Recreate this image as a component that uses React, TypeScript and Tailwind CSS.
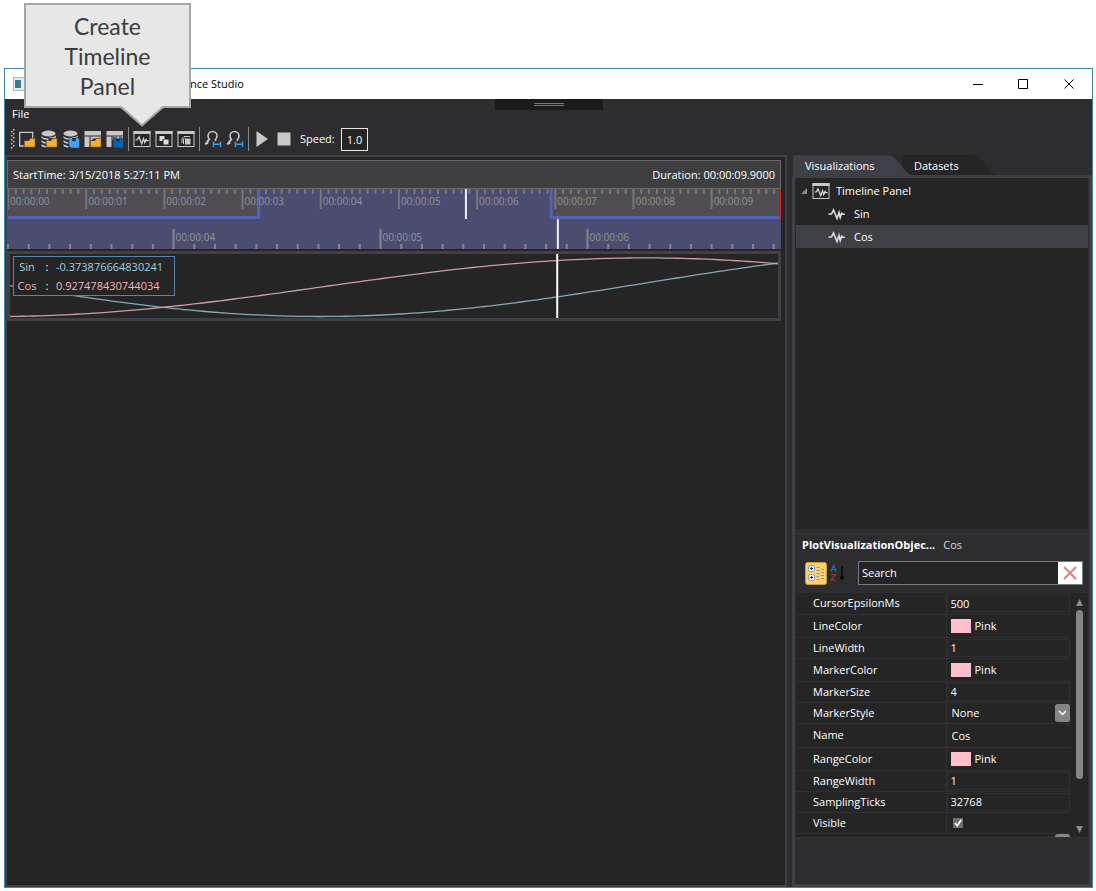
import React from 'react';

const VIEW_START = 3.2;
const VIEW_SPAN = 3.74;
const DURATION = 9.9;
const CURSOR = 5.857;

const navPct = (t: number) => `${(t / DURATION) * 100}%`;
const viewPct = (t: number) => `${((t - VIEW_START) / VIEW_SPAN) * 100}%`;

const plotW = 767;
const curve = (fn: (t: number) => number) => {
  const pts: string[] = [];
  for (let x = 0; x <= plotW; x += 6) {
    const t = VIEW_START + 0.015 + (x / plotW) * (VIEW_SPAN - 0.03);
    pts.push(`${x},${fn(t).toFixed(2)}`);
  }
  pts.push(`${plotW},${fn(VIEW_START + VIEW_SPAN - 0.015).toFixed(2)}`);
  return pts.join(' ');
};
const sinPoints = curve((t) => 62.5 - (Math.sin(t) + 1) * 33.4);
const cosPoints = curve((t) => 62.5 - (Math.cos(t) + 1) * 29.3);

function Ico({ children }: { children: React.ReactNode }) {
  return (
    <svg width="18" height="18" viewBox="0 0 18 18" fill="none" aria-hidden="true">
      {children}
    </svg>
  );
}

const Folder = () => <path d="M6.200 10.500H11l1.500-2.200H17.200V17.200H6.200z" fill="#f5ae33" stroke="#2d2d30" strokeWidth=".6" />;
const Disk = ({ c }: { c: string }) => (
  <path d="M7 7.500h3.500v3.500h3V7.500h2l2 2V18H9l-2-2z" fill={c} stroke="#2d2d30" strokeWidth=".5" />
);
const Stack = () => (
  <g fill="#c8c8c8">
    <ellipse cx="8.500" cy="3.500" rx="7" ry="3" />
    <path d="M1.500 6c1.500 2.200 5 2.400 7 2.400V10C5 10 2 9 1.500 7.800zM1.500 10c1 1.400 3 2 5 2.200v1.600c-3-.2-4.600-1-5-2zM1.500 14c1 1.200 3 1.800 5 2v1.500c-3-.2-4.600-.9-5-1.800z" />
    <path d="M9 7.500c3 0 6-.7 6.800-2V8H9z" />
  </g>
);
const Layout = () => (
  <g fill="#c8c8c8">
    <path d="M0.500 1h16.500v4.500H.5zM.5 6.500h5V17h-5z" />
    <path d="M6.500 6.500H17v2H8.500V10h-2z" />
  </g>
);
const Frame = () => (
  <>
    <rect x="1" y="1.500" width="16" height="15" fill="#252526" stroke="#c8c8c8" />
    <path d="M.5 1h17v3H.5z" fill="#c8c8c8" />
  </>
);
const Wave = () => (
  <path d="M2.500 10h1.800l1.700-3.300 2.700 7 1.800-5 1.200 4 1.500-4v2h2.300" stroke="#dcdcdc" strokeWidth="1.200" />
);
const BigWave = () => (
  <path d="M.5 9h3l2-4L9 13.500l2-6 1.200 5 1.600-5v1.700h3" stroke="#dcdcdc" strokeWidth="1.600" />
);
const Omega = () => (
  <>
    <path d="M1 13.500h2.500V11l2-1.500C4.500 8.500 4 7.500 4 6a4.500 4.500 0 1 1 9 0c0 1.500-.5 2.600-1.500 3.500V11" stroke="#c8c8c8" strokeWidth="1.600" />
    <path d="M1 14.500l3.500-3.500" stroke="#c8c8c8" strokeWidth="1.600" />
    <path d="M9.500 11.500V17M16.500 11.500V17M10 14.300h6" stroke="#3a9de8" strokeWidth="1.500" />
  </>
);

function Tool({ label, children }: { label: string; children: React.ReactNode }) {
  return (
    <button aria-label={label} className="flex h-6 w-[22px] items-center justify-center">
      {children}
    </button>
  );
}
const Sep = () => (
  <div className="flex w-[5px] justify-center">
    <div className="h-6 w-px bg-[#8a8a8e]" />
  </div>
);

function Toolbar() {
  return (
    <div className="flex h-6 items-center pl-1.5">
      <svg width="5" height="20" viewBox="0 0 5 20" aria-hidden="true">
        {[0, 4, 8, 12, 16].map((y) => (
          <g key={y} fill="#d0d0d0">
            <rect x="2" y={y} width="1.500" height="1.500" />
            <rect x="0" y={y + 2} width="1.500" height="1.500" />
          </g>
        ))}
      </svg>
      <Tool label="Open store">
        <Ico>
          <path d="M6 16H1.700V2.300h13V9" stroke="#c8c8c8" strokeWidth="1.300" />
          <Folder />
        </Ico>
      </Tool>
      <Tool label="Open dataset"><Ico><Stack /><Folder /></Ico></Tool>
      <Tool label="Save dataset"><Ico><Stack /><Disk c="#3ea2f5" /></Ico></Tool>
      <Tool label="Open layout"><Ico><Layout /><Folder /></Ico></Tool>
      <Tool label="Save layout"><Ico><Layout /><Disk c="#0065b3" /></Ico></Tool>
      <Sep />
      <Tool label="Create timeline panel"><Ico><Frame /><Wave /></Ico></Tool>
      <Tool label="Create 2D panel">
        <Ico><Frame /><path d="M4.500 6h5v3h-2v2h-3zM8.500 9.500h5v5h-5z" fill="#dcdcdc" /></Ico>
      </Tool>
      <Tool label="Create 3D panel">
        <Ico>
          <Frame />
          <path d="M8 8.500h5.500v6H8z" fill="#c8c8c8" />
          <path d="M5 13V8.500L7 6.500h6M6.500 14V9L8 7.500" stroke="#c8c8c8" />
        </Ico>
      </Tool>
      <Sep />
      <Tool label="Zoom to session"><Ico><Omega /></Ico></Tool>
      <Tool label="Zoom to selection"><Ico><Omega /></Ico></Tool>
      <Sep />
      <Tool label="Play"><Ico><path d="M3.500 1l11.500 8-11.500 8z" fill="#c8c8c8" /></Ico></Tool>
      <Tool label="Stop"><Ico><path d="M2.500 2.500h13v13h-13z" fill="#c8c8c8" /></Ico></Tool>
      <label htmlFor="speed" className="ml-[5px] w-[41px]">Speed:</label>
      <input id="speed" defaultValue="1.0" className="h-[23px] w-[27px] border border-[#e8e8e8] bg-[#252526] text-center text-white" />
    </div>
  );
}

function Navigator() {
  return (
    <svg className="block h-[30px] w-full" role="img" aria-label="Session navigator">
      <rect width="100%" height="30" fill="#504e53" />
      <rect x={navPct(VIEW_START)} width={navPct(VIEW_SPAN)} height="30" fill="#4a4d70" />
      {Array.from({ length: 99 }, (_, i) => (
        <rect key={i} x={navPct(i / 10)} y="0" width="2" height={i % 10 ? 5 : 20} fill="#76767c" />
      ))}
      <rect y="27" width={navPct(VIEW_START)} height="3" fill="#5461b5" />
      <rect x={navPct(VIEW_START)} width="3" height="30" fill="#5461b5" />
      <rect x={navPct(VIEW_START + VIEW_SPAN)} width="3" height="30" fill="#5461b5" />
      <rect x={navPct(VIEW_START + VIEW_SPAN)} y="27" width="31%" height="3" fill="#5461b5" />
      {Array.from({ length: 10 }, (_, i) => (
        <text key={i} x={navPct(i)} dx="3" y="16" fontSize="10" fill="#949498">{`00:00:0${i}`}</text>
      ))}
      <rect x="0" width="1" height="30" fill="#128a12" />
      <rect x={navPct(CURSOR)} width="2" height="30" fill="#f0f0f0" />
      <rect x="100%" width="2" height="30" fill="#d81e1e" transform="translate(-1 0)" />
    </svg>
  );
}

function ViewRuler() {
  return (
    <svg className="block h-[30px] w-full" role="img" aria-label="View ruler">
      <rect width="100%" height="30" fill="#4a4d70" />
      {Array.from({ length: 38 }, (_, i) => {
        const n = 32 + i;
        const major = n % 10 === 0;
        return <rect key={n} x={viewPct(n / 10)} y={major ? 10 : 25} width="2" height={major ? 20 : 5} fill="#85868f" />;
      })}
      {[4, 5, 6].map((n) => (
        <text key={n} x={viewPct(n)} dx="3" y="22" fontSize="10" fill="#949498">{`00:00:0${n}`}</text>
      ))}
      <rect x={viewPct(CURSOR)} width="2" height="30" fill="#f0f0f0" />
    </svg>
  );
}

function Plot() {
  return (
    <div className="relative mt-0.5 border-[3px] border-[#3f3f46] bg-[#252526]">
      <svg className="block h-16 w-full" viewBox="0 0 767 64" preserveAspectRatio="none" fill="none" role="img" aria-label="Sin and Cos plot">
        <polyline points={sinPoints} stroke="#84aab5" strokeWidth="1.300" />
        <polyline points={cosPoints} stroke="#cf9ba5" strokeWidth="1.300" />
        <rect x="545.500" width="2" height="64" fill="#fff" />
      </svg>
      <dl className="absolute left-[3px] top-0.5 grid h-10 w-[162px] grid-cols-[22px_18px_1fr] content-start border border-[#5b86a8] bg-[#252526] pl-0.5 leading-[19px]">
        <dt className="text-center text-[#9fd3e0]">Sin</dt>
        <dd className="text-center">:</dd>
        <dd className="text-[#9fd3e0]">-0.373876664830241</dd>
        <dt className="text-center text-[#f5b3bf]">Cos</dt>
        <dd className="text-center">:</dd>
        <dd className="text-[#f5b3bf]">0.927478430744034</dd>
      </dl>
    </div>
  );
}

function Tree() {
  return (
    <ul className="flex-1 bg-[#252526] pt-px leading-[23px]">
      <li className="flex h-[23px] items-center pl-1">
        <svg width="8" height="8" viewBox="0 0 8 8" aria-hidden="true"><path d="M7 1v6H1z" fill="#8c8c8c" /></svg>
        <span className="ml-1"><Ico><Frame /><Wave /></Ico></span>
        <span className="ml-1.5">Timeline Panel</span>
      </li>
      <li className="flex h-[23px] items-center pl-8"><Ico><BigWave /></Ico><span className="ml-2">Sin</span></li>
      <li className="flex h-[23px] items-center bg-[#3f3f46] pl-8"><Ico><BigWave /></Ico><span className="ml-2">Cos</span></li>
    </ul>
  );
}

type Row = { name: string; value: string; kind: 'text' | 'color' | 'select' | 'plain' | 'check' };
const rows: Row[] = [
  { name: 'CursorEpsilonMs', value: '500', kind: 'text' },
  { name: 'LineColor', value: 'Pink', kind: 'color' },
  { name: 'LineWidth', value: '1', kind: 'text' },
  { name: 'MarkerColor', value: 'Pink', kind: 'color' },
  { name: 'MarkerSize', value: '4', kind: 'text' },
  { name: 'MarkerStyle', value: 'None', kind: 'select' },
  { name: 'Name', value: 'Cos', kind: 'plain' },
  { name: 'RangeColor', value: 'Pink', kind: 'color' },
  { name: 'RangeWidth', value: '1', kind: 'text' },
  { name: 'SamplingTicks', value: '32768', kind: 'text' },
  { name: 'Visible', value: '', kind: 'check' },
];
const rowHeight = { text: 'h-[21px]', select: 'h-[21px]', check: 'h-[21px]', color: 'h-[23px]', plain: 'h-6' };

function Value({ row }: { row: Row }) {
  if (row.kind === 'color')
    return (
      <div className="flex items-center pl-1">
        <span className="h-3.5 w-5 bg-[#ffc0cb]" />
        <span className="ml-1">{row.value}</span>
      </div>
    );
  if (row.kind === 'select')
    return (
      <div className="flex items-center">
        <select id={row.name} className="-mr-[15px] h-[18px] flex-1 appearance-none bg-transparent pl-[5px] text-white">
          <option>{row.value}</option>
        </select>
        <svg width="15" height="18" viewBox="0 0 15 18" className="pointer-events-none" aria-hidden="true">
          <rect width="15" height="18" rx="2.500" fill="#858585" />
          <path d="M4 7l3.500 3.500L11 7" fill="none" stroke="#fff" strokeWidth="1.500" />
        </svg>
      </div>
    );
  if (row.kind === 'check')
    return (
      <div className="relative ml-1.5 h-2.5 w-2.5">
        <input id={row.name} type="checkbox" defaultChecked className="block h-2.5 w-2.5 appearance-none bg-[#6e6e6e]" />
        <svg className="pointer-events-none absolute inset-0" width="10" height="10" viewBox="0 0 10 10" aria-hidden="true">
          <path d="M2 5l2.200 2.700L8.300 1.800" fill="none" stroke="#fff" strokeWidth="1.800" />
        </svg>
      </div>
    );
  return (
    <input
      id={row.name}
      defaultValue={row.value}
      className={row.kind === 'text' ? 'block h-[18px] w-full border border-[#2f2f32] bg-transparent pl-[3px]' : 'block h-[18px] w-full bg-transparent pl-[5px]'}
    />
  );
}

function Properties() {
  return (
    <section className="flex h-[351px] flex-col border-t border-[#333338] bg-[#2d2d30]">
      <div className="flex h-[22px] items-center gap-2 pl-1.5">
        <b className="font-bold">PlotVisualizationObjec...</b>
        <span className="text-[#dcdcdc]">Cos</span>
      </div>
      <div className="mb-[3px] flex h-[34px] items-center pl-[9px] pr-[5px]">
        <button aria-label="Categorized">
          <svg width="22" height="23" viewBox="0 0 22 23" className="block">
            <rect x=".5" y=".5" width="21" height="22" rx="2" fill="#fbd075" stroke="#c99b3c" />
            <g fill="#fff" stroke="#7d93b8"><rect x="3.500" y="3.500" width="6" height="6" rx="2" /><rect x="3.500" y="12.500" width="6" height="6" rx="2" /></g>
            <path d="M5 6.500h3M6.500 5v3M5 15.500h3M6.500 14v3" stroke="#1a2f55" />
            <path d="M11.500 5.500h3M11.500 8.500h3M11.500 11.500h3M11.500 14.500h3M11.500 17.500h3M16 7.500h3M16 10.500h3M16 13.500h3M16 16.500h3" stroke="#a09a80" />
          </svg>
        </button>
        <button aria-label="Sort alphabetically" className="ml-[3px]">
          <svg width="16" height="18" viewBox="0 0 16 18" className="block" fill="none">
            <path d="M1 7.500L3.500 1.500 6 7.500M2 5.500h3" stroke="#3565b8" strokeWidth="1.200" />
            <path d="M1 10.500h4.500L1 16h5" stroke="#a83236" strokeWidth="1.200" />
            <path d="M12 2v13M10 12.500l2 3 2-3" stroke="#050505" strokeWidth="1.300" />
          </svg>
        </button>
        <div className="ml-3 flex h-6 flex-1 border border-[#7a7a7a] bg-[#252526]">
          <input aria-label="Search" defaultValue="Search" className="min-w-0 flex-1 bg-transparent pl-[3px]" />
          <button aria-label="Clear" className="flex w-6 items-center justify-center bg-white">
            <svg width="14" height="14" viewBox="0 0 14 14"><path d="M1 1l12 12M13 1L1 13" stroke="#e08080" strokeWidth="2" /></svg>
          </button>
        </div>
      </div>
      <div className="flex h-[245px] overflow-hidden border-b border-[#48282f] bg-[#252526]">
        <div className="flex-1">
          <table className="w-full table-fixed border-collapse">
            <tbody>
              {rows.map((r) => (
                <tr key={r.name} className={rowHeight[r.kind]}>
                  <th className="w-[150px] border-b border-r border-[#303033] p-0 pl-[17px] text-left font-normal leading-4">
                    <label htmlFor={r.kind === 'color' ? undefined : r.name}>{r.name}</label>
                  </th>
                  <td className="border-b border-[#303033] p-0 leading-4"><Value row={r} /></td>
                </tr>
              ))}
            </tbody>
          </table>
          <div className="ml-auto h-3 w-[15px] rounded-[3px] bg-[#858585]" />
        </div>
        <div className="flex w-[18px] flex-col items-center pb-1 pt-1.5">
          <svg width="7" height="7" viewBox="0 0 7 7"><path d="M0 7L3.500 0 7 7z" fill="#8a8a8a" /></svg>
          <div className="mt-1 h-[169px] w-[7px] rounded-full bg-[#858585]" />
          <svg className="mt-auto" width="7" height="7" viewBox="0 0 7 7"><path d="M0 0L3.500 7 7 0z" fill="#8a8a8a" /></svg>
        </div>
      </div>
    </section>
  );
}

function Callout() {
  return (
    <div className="absolute left-6 top-[3px] w-[167px]">
      <p className="h-[105px] border-2 border-[#a6a6a6] bg-[#e7e7e7] pt-1.5 text-center font-['Lato',sans-serif] text-[23px] leading-[30px] text-[#3c3c3c]">
        Create<br />Timeline<br />Panel
      </p>
      <svg className="-mt-0.5 ml-[96px] block relative" width="44" height="21" viewBox="0 0 44 21" aria-hidden="true">
        <path d="M1 0v1l21 18.500L43 1V0z" fill="#e7e7e7" />
        <path d="M0 1.200h1.300L22 19.500 42.700 1.200H44" fill="none" stroke="#a6a6a6" strokeWidth="2" />
      </svg>
    </div>
  );
}

export default function App() {
  return (
    <div className="relative flex min-h-screen flex-col bg-white pb-[3px] pl-1 pr-[3px] pt-[68px] font-['Open_Sans',sans-serif] text-[11px] leading-4 text-white">
      <div className="flex flex-1 flex-col border border-[#3a87a8] bg-[#2d2d30]">
        <header className="flex h-[30px] items-center bg-white text-black">
          <svg className="ml-2" width="16" height="14" viewBox="0 0 16 14" aria-hidden="true">
            <rect x=".5" y=".5" width="15" height="13" fill="#e8eef0" stroke="#b0b6b8" />
            <rect x="2" y="3" width="6" height="8" fill="#35808c" />
          </svg>
          <h1 className="ml-[161px]">nce Studio</h1>
          <div className="ml-auto flex">
            <button aria-label="Minimize" className="flex h-[30px] w-[46px] items-center justify-center"><svg width="11" height="11"><path d="M1 5.500h10" stroke="#000" /></svg></button>
            <button aria-label="Maximize" className="flex h-[30px] w-[46px] items-center justify-center"><svg width="11" height="11" fill="none"><path d="M.5.5h9v9h-9z" stroke="#000" /></svg></button>
            <button aria-label="Close" className="flex h-[30px] w-[46px] items-center justify-center"><svg width="11" height="11"><path d="M.5.5l9 9M9.500.5l-9 9" stroke="#000" /></svg></button>
          </div>
        </header>
        <div className="flex h-7 items-start justify-between">
          <button className="mt-[7px] w-10 pl-[7px] text-left">File</button>
          <div className="flex h-[11px] w-[108px] flex-col items-center justify-center gap-px bg-[#1b1b1c]">
            <span className="h-px w-[30px] bg-[#77777a]" />
            <span className="h-px w-[30px] bg-[#77777a]" />
          </div>
          <span className="w-10" />
        </div>
        <Toolbar />
        <div className="mt-1 flex flex-1">
          <main className="min-w-0 flex-1 border-2 border-[#3f3f46] bg-[#252526] pr-1 pt-[3px]">
            <div className="flex h-[29px] items-center justify-between border border-[#6a6a6a] bg-[#3f3f42] px-[5px]">
              <span>StartTime: 3/15/2018 5:27:11 PM</span>
              <span>Duration: 00:00:09.9000</span>
            </div>
            <Navigator />
            <ViewRuler />
            <Plot />
          </main>
          <aside className="ml-[5px] flex w-[300px] flex-col">
            <nav className="relative flex h-5 pl-px">
              <a href="#visualizations" className="relative z-10 block h-5 w-[109px] pl-3 leading-[21px]">
                <svg className="absolute left-0 top-0" width="121" height="20" viewBox="0 0 121 20" aria-hidden="true"><path d="M0 20V3a3 3 0 0 1 3-3h90c14 0 16 20 28 20z" fill="#3f3f46" /></svg>
                <span className="relative">Visualizations</span>
              </a>
              <a href="#datasets" className="relative block h-5 w-24 pl-3 leading-[21px]">
                <svg className="absolute left-0 top-0" width="98" height="20" viewBox="0 0 98 20" aria-hidden="true"><path d="M0 20V3a3 3 0 0 1 3-3h66c14 0 16 20 28 20z" fill="#252526" /></svg>
                <span className="relative">Datasets</span>
              </a>
            </nav>
            <div className="flex flex-1 flex-col border-[3px] border-[#3f3f46] bg-[#2d2d30] px-px">
              <Tree />
              <div className="mt-1 flex flex-col"><Properties /></div>
            </div>
          </aside>
        </div>
      </div>
      <Callout />
    </div>
  );
}
